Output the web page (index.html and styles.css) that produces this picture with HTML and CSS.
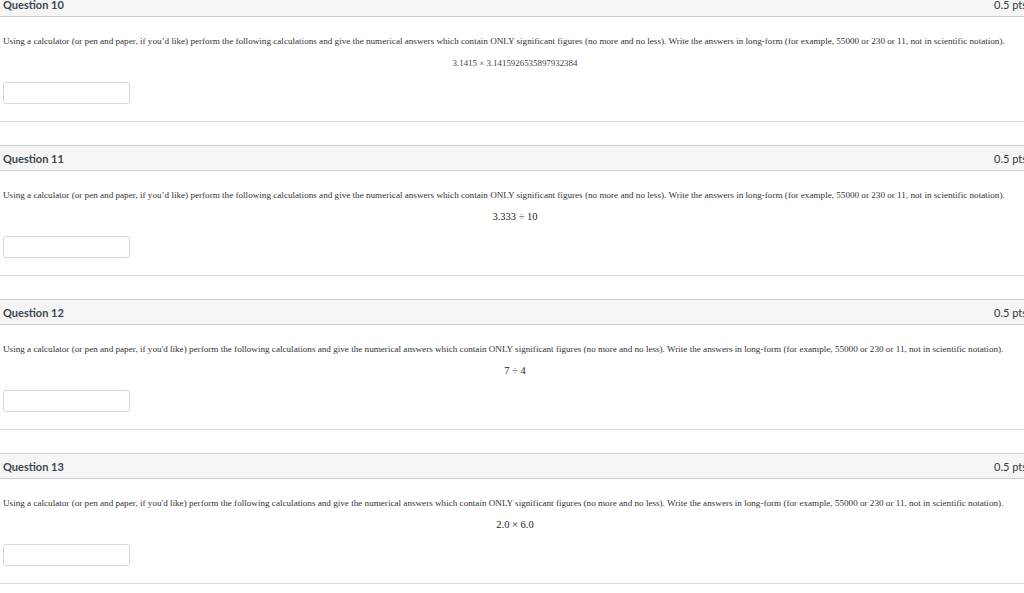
FILE: index.html
```html
<!DOCTYPE html>
<html>
<head>
<meta charset="utf-8">
<link rel="stylesheet" href="styles.css">
</head>
<body>
<div class="quiz">
  <section class="question">
    <header class="q-head"><span class="q-name">Question 10</span><span class="q-pts">0.5 pts</span></header>
    <div class="q-body">
      <p class="q-text">Using a calculator (or pen and paper, if you’d like) perform the following calculations and give the numerical answers which contain ONLY significant figures (no more and no less). Write the answers in long-form (for example, 55000 or 230 or 11, not in scientific notation).</p>
      <p class="q-eq light">3.1415 × 3.1415926535897932384</p>
      <div class="answer"></div>
    </div>
  </section>
  <section class="question">
    <header class="q-head"><span class="q-name">Question 11</span><span class="q-pts">0.5 pts</span></header>
    <div class="q-body">
      <p class="q-text">Using a calculator (or pen and paper, if you’d like) perform the following calculations and give the numerical answers which contain ONLY significant figures (no more and no less). Write the answers in long-form (for example, 55000 or 230 or 11, not in scientific notation).</p>
      <p class="q-eq">3.333 ÷ 10</p>
      <div class="answer"></div>
    </div>
  </section>
  <section class="question">
    <header class="q-head"><span class="q-name">Question 12</span><span class="q-pts">0.5 pts</span></header>
    <div class="q-body">
      <p class="q-text">Using a calculator (or pen and paper, if you'd like) perform the following calculations and give the numerical answers which contain ONLY significant figures (no more and no less). Write the answers in long-form (for example, 55000 or 230 or 11, not in scientific notation).</p>
      <p class="q-eq">7 ÷ 4</p>
      <div class="answer"></div>
    </div>
  </section>
  <section class="question">
    <header class="q-head"><span class="q-name">Question 13</span><span class="q-pts">0.5 pts</span></header>
    <div class="q-body">
      <p class="q-text">Using a calculator (or pen and paper, if you'd like) perform the following calculations and give the numerical answers which contain ONLY significant figures (no more and no less). Write the answers in long-form (for example, 55000 or 230 or 11, not in scientific notation).</p>
      <p class="q-eq">2.0 × 6.0</p>
      <div class="answer"></div>
    </div>
  </section>
</div>
</body>
</html>
```
FILE: styles.css
```css
html, body {
  margin: 0;
  padding: 0;
  background: #fff;
  overflow: hidden;
}
.quiz {
  width: 1030px;
  margin-top: -9px;
  display: flex;
  flex-direction: column;
  gap: 23px;
}
.question {
  display: flex;
  flex-direction: column;
}
.q-head {
  height: 24px;
  background: #f5f5f5;
  border-top: 1px solid #c7cdd1;
  border-bottom: 1px solid #c7cdd1;
  display: flex;
  align-items: center;
  justify-content: space-between;
  padding: 0 3px;
  font-family: Lato, "Liberation Sans", sans-serif;
  font-size: 11px;
  font-weight: 700;
  color: #3a4750;
}
.q-pts {
  font-weight: 400;
  color: #2d3b45;
}
.q-body {
  padding: 18px 3px 17px;
  border-bottom: 1px solid #dadcde;
}
.q-text {
  margin: 0;
  font-family: "Liberation Serif", serif;
  font-size: 9.15px;
  line-height: 12px;
  color: #333;
  white-space: nowrap;
}
.q-eq {
  margin: 10px 0 0;
  text-align: center;
  font-family: "Liberation Serif", serif;
  font-size: 10.5px;
  line-height: 12px;
  color: #1a1a1a;
}
.q-eq.light {
  font-size: 8.9px;
  color: #444;
}
.answer {
  margin-top: 13px;
  width: 125px;
  height: 20px;
  border: 1px solid #d4d6d8;
  border-radius: 3px;
  background: #fff;
}
```
